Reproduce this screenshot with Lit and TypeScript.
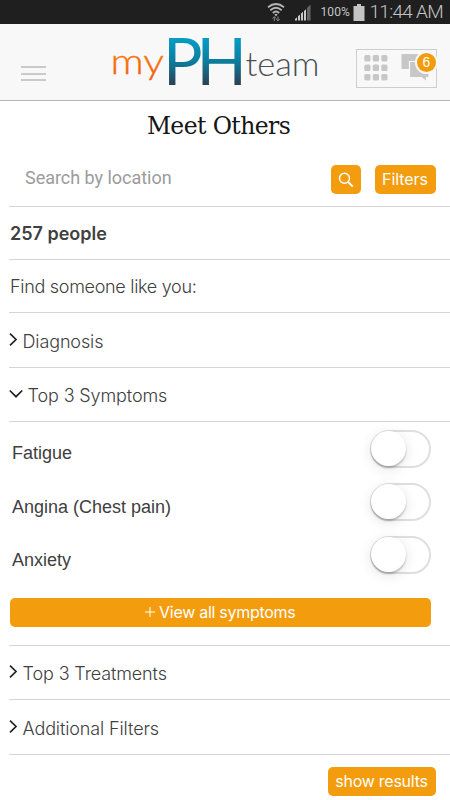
import { LitElement, html, css, svg } from "lit";
import { customElement, property } from "lit/decorators.js";

@customElement("status-bar")
class StatusBar extends LitElement {
  static styles = css`
    :host { display: flex; height: 24px; background: #1f1f1f; color: #c4c4c4; justify-content: flex-end; align-items: center; box-sizing: border-box; padding-right: 7px; font-family: Roboto, sans-serif; }
    .wifi { width: 18px; height: 20px; margin-right: 9px; }
    .signal { width: 18px; height: 18px; margin-right: 9px; }
    .percent { font-size: 12px; width: 30px; white-space: nowrap; margin-right: 2px; letter-spacing: 0.1px; }
    .battery { width: 12px; height: 17px; margin-right: 5px; }
    .time { font-size: 19px; line-height: 24px; white-space: nowrap; font-weight: 300; letter-spacing: -0.7px; }
  `;
  render() {
    return html`
      <svg class="wifi" viewBox="0 0 18 20">
        <g fill="none" stroke="#b5b5b5" stroke-width="1.9">
          <path d="M1 5.2Q9 -1 17 5.2" /><path d="M3.3 8.2Q9 3.4 14.7 8.2" /><path d="M5.8 11Q9 8.2 12.2 11" />
        </g>
        <path d="M7.4 12.6a2.2 2.2 0 0 1 3.2 0L9 14.4z" fill="#b5b5b5" />
        <path d="M7.3 19v-4m-1.8 1.6 1.8-2 1.8 2M11 14.5v4.3m-1.7-1.8 1.7 1.9 1.7-1.9" fill="none" stroke="#858585" stroke-width="1" />
      </svg>
      <svg class="signal" viewBox="0 0 18 18">
        <path d="M1 17.5V16l2-1.8v3.3zM4 17.5v-4.3l2-1.8v6.1zM7 17.5v-7l2-1.8v8.8zM10 17.5V8l2-1.8v11.3z" fill="#c9c9c9" />
        <path d="M13 17.5V5l3.5-3.5v16z" fill="#666" />
      </svg>
      <span class="percent">100%</span>
      <svg class="battery" viewBox="0 0 12 17"><path d="M4 0h4v2h3.5v15H.5V2H4z" fill="#c4c4c4" /></svg>
      <span class="time">11:44 AM</span>
    `;
  }
}

@customElement("app-header")
class AppHeader extends LitElement {
  static styles = css`
    :host { display: grid; grid-template-columns: 21px 80px 218px 37px 81px; height: 77px; box-sizing: border-box; background: #f8f8f8; border-bottom: 1px solid #b5b5b5; }
    .menu { grid-column: 2; display: flex; flex-direction: column; gap: 4.5px; padding-top: 42px; width: 25px; }
    .menu i { height: 2px; background: #cacaca; }
    .logo { grid-column: 3; width: 218px; height: 75px; overflow: visible; }
    .tools { grid-column: 5; position: relative; margin-top: 25px; width: 81px; height: 39px; box-sizing: border-box; border: 1px solid #cecece; }
    .tools svg { display: block; width: 79px; height: 37px; }
    .badge { position: absolute; left: 60px; top: 3px; width: 19px; height: 19px; border-radius: 50%; background: #f39c0b; box-shadow: 0 0 0 2px #f8f8f8; color: #fff; font: 14px/19px "Liberation Sans", sans-serif; text-align: center; }
  `;
  render() {
    const dots = [0, 1, 2].flatMap((r) => [0, 1, 2].map((c) =>
      svg`<rect x=${7.3 + c * 8.5} y=${5 + r * 9.5} width="6.2" height="6.6" rx="1.5" fill="#c7c7c7" />`));
    return html`
      <div class="menu"><i></i><i></i><i></i></div>
      <svg class="logo" viewBox="101 24 218 75">
        <defs>
          <linearGradient id="deep" gradientUnits="userSpaceOnUse" x1="0" y1="36" x2="0" y2="85">
            <stop offset="0" stop-color="#059fc9" /><stop offset=".5" stop-color="#0b7f9f" /><stop offset="1" stop-color="#2b4056" />
          </linearGradient>
          <linearGradient id="warm" gradientUnits="userSpaceOnUse" x1="0" y1="56" x2="0" y2="88">
            <stop offset="0" stop-color="#f7760f" /><stop offset="1" stop-color="#ed5610" />
          </linearGradient>
        </defs>
        <text x="110.5" y="74" font-family="Lato" font-weight="300" font-size="35" textLength="53.5" lengthAdjust="spacingAndGlyphs" fill="url(#warm)" stroke="url(#warm)" stroke-width=".35">my</text>
        <text x="163 196.5" y="84.6" font-family="Lato" font-size="66" fill="url(#deep)">PH</text>
        <text x="245.5" y="75.5" font-family="Lato" font-weight="300" font-size="34" textLength="74" lengthAdjust="spacingAndGlyphs" fill="#4a5053">team</text>
      </svg>
      <div class="tools">
        <svg viewBox="0 0 79 37">
          ${dots}
          <path d="M44.5 4h18v15h-18z" fill="#c7c7c7" />
          <path d="M52.5 11.5H72v16h-2.5v4.5l-5-4.5h-12z" fill="#c7c7c7" stroke="#f8f8f8" stroke-width="1.2" />
        </svg>
        <span class="badge">6</span>
      </div>
    `;
  }
}

@customElement("filter-row")
class FilterRow extends LitElement {
  @property() label = "";
  @property({ type: Boolean }) open = false;
  static styles = css`
    :host { display: flex; align-items: center; box-sizing: border-box; padding-top: 3px; }
    svg { flex: none; width: 13.5px; height: 16px; margin-top: -4px; }
    .open { width: 18.5px; }
  `;
  render() {
    return html`
      <svg class=${this.open ? "open" : ""} viewBox=${this.open ? "0 0 18.5 16" : "0 0 13.5 16"} fill="none" stroke="#222" stroke-width="1.7">
        <path d=${this.open ? "M.8 4.5 7 10.7 13.2 4.5" : "M1 1.7 7 7.5 1 13.3"} />
      </svg>
      <span>${this.label}</span>
    `;
  }
}

@customElement("toggle-switch")
class ToggleSwitch extends LitElement {
  static styles = css`
    :host { display: flex; box-sizing: border-box; width: 61px; height: 38px; border: 2px solid #dfdfdf; border-radius: 19px; background: #fff; }
    .knob { width: 35px; height: 35px; margin-left: -1px; margin-top: -1px; border-radius: 50%; background: #fff; box-shadow: 0 2px 2px rgba(0,0,0,.22), 0 3px 14px rgba(0,0,0,.11); }
  `;
  render() { return html`<div class="knob"></div>`; }
}

@customElement("app-root")
export class AppRoot extends LitElement {
  static styles = css`
    :host { display: block; width: 450px; height: 800px; overflow: hidden; background: #fff; color: #404040; font: 18px/22px Inter, sans-serif; }
    h1 { margin: 0; height: 51px; padding-right: 13px; text-align: center; font: 400 23.5px/50px "DejaVu Serif", serif; letter-spacing: -0.6px; color: #161616; }
    .search { display: flex; align-items: center; height: 55px; margin-left: 9px; padding: 0 14.5px 0 16px; box-sizing: border-box; border-bottom: 1px solid #d4d4d4; }
    .hint { flex: 1; margin-top: -2px; color: #9b9b9b; font: 18px/22px Roboto, sans-serif; letter-spacing: -0.03px; }
    .btn { display: flex; align-items: center; justify-content: center; height: 29px; padding-bottom: 1px; border-radius: 5px; background: #f39c0e; color: #fff; font-size: 16px; letter-spacing: -0.17px; white-space: nowrap; box-sizing: border-box; }
    .find { width: 30px; margin-right: 14px; padding: 1px 0 0; }
    .find svg { width: 16px; height: 16px; }
    .filters { width: 61px; padding-bottom: 0; letter-spacing: -0.05px; }
    .line { display: flex; align-items: center; box-sizing: border-box; margin-left: 9px; border-bottom: 1px solid #d4d4d4; }
    .count { height: 53px; padding: 1px 0 0 1px; font-weight: 600; }
    .intro { height: 53px; padding: 1px 0 0 1px; font-weight: 300; letter-spacing: -0.3px; }
    .first { height: 54px; }
    .last { height: 55px; }
    .section { font-size: 18px; font-weight: 300; letter-spacing: -0.12px; }
    .symptoms { display: grid; grid-template-rows: 53px 53px 53px; padding: 1px 19px 0 12px; }
    .symptom { display: flex; align-items: center; justify-content: space-between; font: 18px/22px "Liberation Sans", sans-serif; }
    .symptom span { margin-top: 7px; }
    .symptom:nth-child(n+2) span { margin-top: 9px; }
    .panel { height: 224px; box-sizing: border-box; border-bottom: 1px solid #d4d4d4; margin-left: 9px; }
    .panel .symptoms { margin-left: -9px; }
    .symptom toggle-switch { margin-top: -2px; }
    .all { margin: 16px 19px 0 0.5px; letter-spacing: -0.28px; }
    .all svg { width: 10px; height: 10px; margin-right: 4px; }
    .footer { display: flex; justify-content: flex-end; padding: 12px 14.5px 0 0; }
    .show { width: 108px; letter-spacing: -0.25px; }
  `;
  render() {
    return html`
      <status-bar></status-bar>
      <app-header></app-header>
      <h1>Meet Others</h1>
      <div class="search">
        <span class="hint">Search by location</span>
        <div class="btn find"><svg viewBox="0 0 16 16" fill="none" stroke="#fff" stroke-width="1.4"><circle cx="6.5" cy="6.3" r="5" /><path d="m10.2 10 4.6 4.6" stroke-width="2" /></svg></div>
        <div class="btn filters">Filters</div>
      </div>
      <div class="line count">257 people</div>
      <div class="line intro">Find someone like you:</div>
      <filter-row class="line section last" label="Diagnosis"></filter-row>
      <filter-row class="line section first" label="Top 3 Symptoms" open></filter-row>
      <div class="panel">
        <div class="symptoms">
          ${["Fatigue", "Angina (Chest pain)", "Anxiety"].map((s) => html`<div class="symptom"><span>${s}</span><toggle-switch></toggle-switch></div>`)}
        </div>
        <div class="btn all"><svg viewBox="0 0 10 10" stroke="#fff"><path d="M5 0v10M0 5h10" /></svg>View all symptoms</div>
      </div>
      <filter-row class="line section first" label="Top 3 Treatments"></filter-row>
      <filter-row class="line section last" label="Additional Filters"></filter-row>
      <div class="footer"><div class="btn show">show results</div></div>
    `;
  }
}
